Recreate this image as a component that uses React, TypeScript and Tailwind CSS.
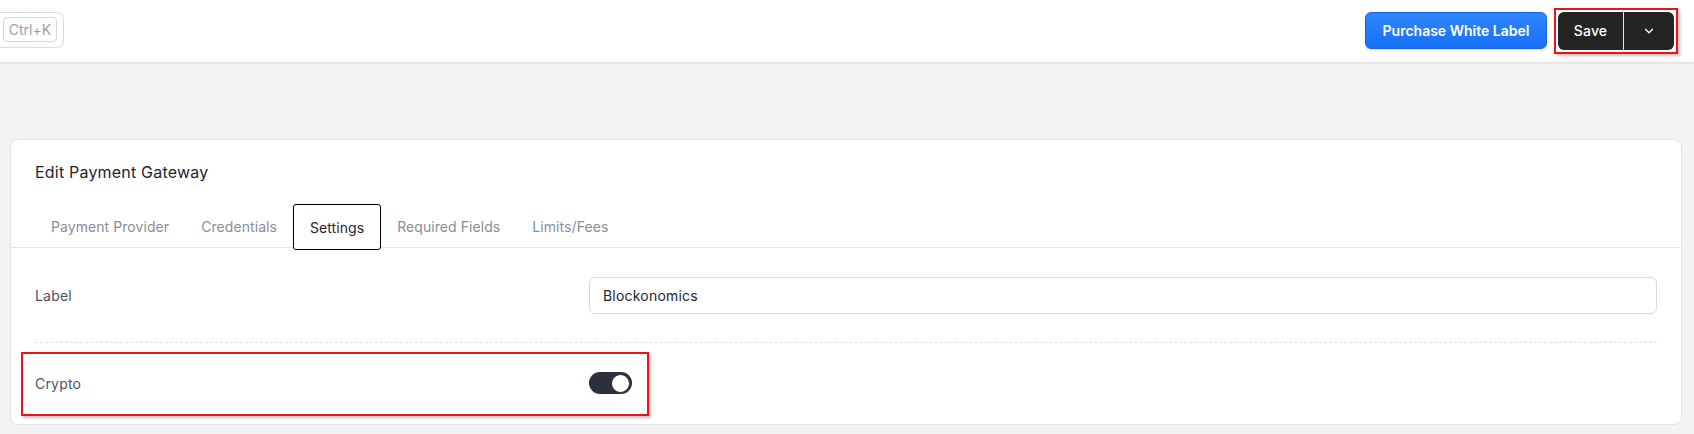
import React from "react";

export default function App() {
  const tabs = ["Payment Provider", "Credentials", "Settings", "Required Fields", "Limits/Fees"];
  return (
    <div className="min-h-[434px] bg-[#f3f3f3] font-['Inter','Noto_Sans',sans-serif] tracking-[0.2px]">
      <header className="h-[63px] bg-white border-b border-[#e3e3e3] shadow-[0_1px_2px_rgba(0,0,0,0.06)] flex items-center justify-between pr-[16px]">
        <div className="h-[36px] w-[64px] border border-l-0 border-[#dcdce0] rounded-r-[7px] flex items-center pl-[3px] mt-[-3px]">
          <span className="h-[25px] w-[54px] border border-[#d6d6dc] rounded-[4px] text-[14px] tracking-normal text-[#a0a0a8] flex items-center justify-center">
            Ctrl+K
          </span>
        </div>
        <div className="flex items-center gap-[7px] mt-[-1px]">
          <button className="h-[37px] w-[182px] rounded-[6px] border border-[#1466e6] bg-gradient-to-b from-[#2f86ff] to-[#1670f5] text-white text-[14px] font-semibold tracking-normal shadow-[0_1px_2px_rgba(0,0,0,0.15)]">
            Purchase White Label
          </button>
          <div className="border-2 border-[#e8141a] p-[2px] shadow-[2px_2px_3px_rgba(0,0,0,0.25)]">
            <div className="flex h-[38px] w-[116px] rounded-[6px] bg-[#242424] text-white overflow-hidden">
              <span className="w-[66px] flex items-center justify-center text-[14px] font-medium border-r border-[#e8e8e8]">Save</span>
              <span className="flex-1 flex items-center justify-center">
                <svg width="14" height="14" viewBox="0 0 24 24" fill="none" stroke="white" strokeWidth="2.2" strokeLinecap="round" strokeLinejoin="round">
                  <path d="M6 9l6 6 6-6" />
                </svg>
              </span>
            </div>
          </div>
        </div>
      </header>

      <main className="pt-[76px] pl-[10px] pr-[12px]">
        <div className="bg-white rounded-[8px] border border-[#e3e3e3] h-[286px]">
          <div className="px-[24px] pt-[20px]">
            <h1 className="text-[16px] leading-[24px] text-[#1f2433]">Edit Payment Gateway</h1>
          </div>
          <div className="flex px-[24px] mt-[20px] border-b border-[#e6e6e6] h-[44px] tracking-[0.07px]">
            {tabs.map((t) =>
              t === "Settings" ? (
                <div key={t} className="h-[46px] px-[16px] border border-black rounded-[3px] flex items-center text-[14px] text-[#1f2433] bg-white">
                  {t}
                </div>
              ) : (
                <div key={t} className="h-[44px] px-[16px] flex items-center text-[14px] text-[#8a8d96]">
                  {t}
                </div>
              )
            )}
          </div>
          <div className="px-[24px]">
            <div className="flex items-center pt-[29px] pb-[28px] border-b border-dashed border-[#e0e0e0]">
              <div className="w-[554px] text-[14px] text-[#4b5263]">Label</div>
              <div className="flex-1 h-[37px] border border-[#d9d9d9] rounded-[6px] flex items-center px-[13px] text-[14px] text-[#1f2433]">
                Blockonomics
              </div>
            </div>
            <div className="relative flex items-center pt-[29px] pb-[29px]">
              <div className="w-[554px] text-[14px] text-[#4b5263]">Crypto</div>
              <div className="w-[43px] h-[22px] rounded-full bg-[#2b303f] flex items-center justify-end pr-[2px]">
                <div className="w-[19px] h-[19px] rounded-full bg-white border border-[#2b303f]" />
              </div>
              <div className="absolute left-[-14px] top-[9px] w-[628px] h-[64px] border-2 border-[#e8141a] shadow-[2px_2px_3px_rgba(0,0,0,0.25)] pointer-events-none" />
            </div>
          </div>
        </div>
      </main>
    </div>
  );
}
